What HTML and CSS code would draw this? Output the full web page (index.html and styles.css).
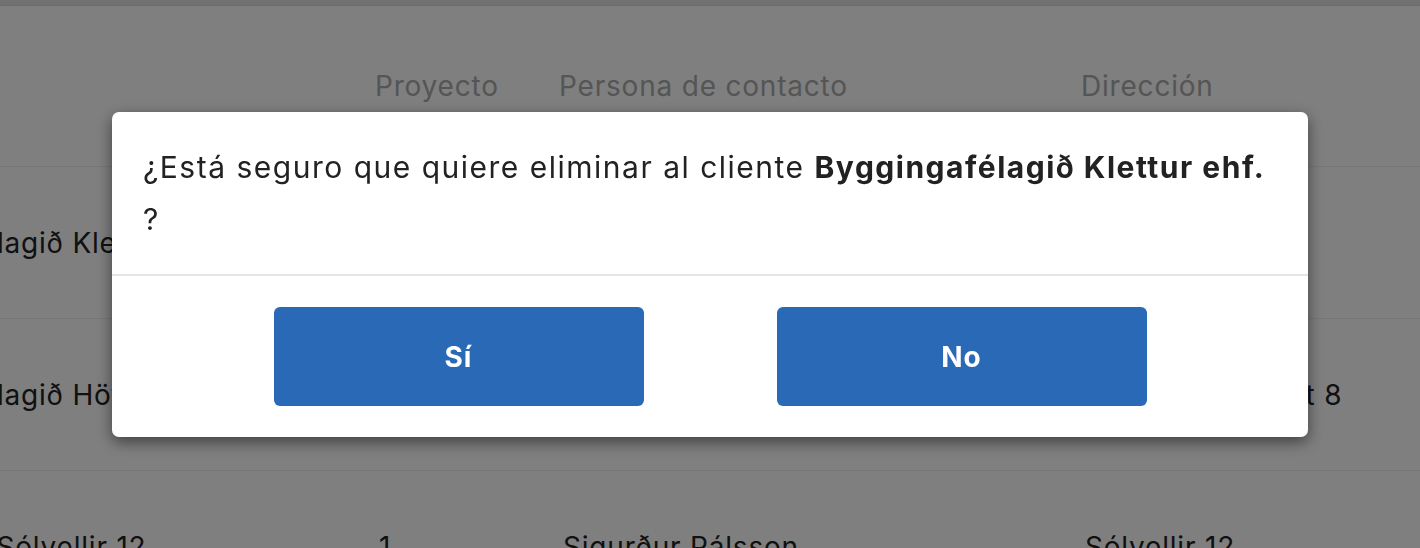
FILE: index.html
```html
<!DOCTYPE html>
<html lang="es">
<head>
<meta charset="utf-8">
<title>Clientes</title>
<link rel="stylesheet" href="styles.css">
</head>
<body>
<div class="topbar"></div>
<div class="table-scroll">
  <div class="table">
    <div class="row head">
      <div class="cell"></div>
      <div class="cell">Proyecto</div>
      <div class="cell">Persona de contacto</div>
      <div class="cell">Dirección</div>
    </div>
    <div class="row">
      <div class="cell">Byggingafélagið Klettur ehf.</div>
      <div class="cell">2</div>
      <div class="cell">Jón Guðmundsson</div>
      <div class="cell">Klettagarðar 4</div>
    </div>
    <div class="row">
      <div class="cell">Byggingafélagið Höfði ehf.</div>
      <div class="cell">3</div>
      <div class="cell">Anna Sigurðardóttir</div>
      <div class="cell">Suðurlandsbraut 8</div>
    </div>
    <div class="row">
      <div class="cell">Húsfélagið Sólvellir 12</div>
      <div class="cell">1</div>
      <div class="cell">Sigurður Pálsson</div>
      <div class="cell">Sólvellir 12</div>
    </div>
  </div>
</div>

<div class="backdrop"></div>
<div class="modal">
  <div class="modal-body">¿Está seguro que quiere eliminar al cliente <b>Byggingafélagið Klettur ehf.</b> ?</div>
  <div class="modal-footer">
    <button class="btn">Sí</button>
    <button class="btn">No</button>
  </div>
</div>
</body>
</html>
```

FILE: styles.css
```css
* { box-sizing: border-box; }
html, body {
  margin: 0;
  height: 100%;
  overflow: hidden;
}
body {
  background: #fff;
  font-family: Inter, Lato, "Liberation Sans", sans-serif;
  color: #222;
}
.topbar {
  height: 6px;
  background: #e2e2e2;
  border-bottom: 1px solid #d8d8d8;
}
.table-scroll {
  overflow: hidden;
}
.table {
  margin-left: -165px;
  font-size: 28px;
  letter-spacing: 0.8px;
}
.row {
  display: grid;
  grid-template-columns: 540px 184px 522px 1fr;
  height: 152px;
  align-items: center;
  border-bottom: 1px solid #eeeeee;
}
.row.head {
  height: 161px;
  color: #aaaaaa;
}
.row:not(.head) .cell {
  padding-left: 4px;
}
.cell {
  white-space: nowrap;
}
.backdrop {
  position: fixed;
  inset: 0;
  background: rgba(0, 0, 0, 0.5);
}
.modal {
  position: fixed;
  top: 112px;
  left: 112px;
  width: 1196px;
  background: #fff;
  border-radius: 7px;
  box-shadow: 0 5px 15px rgba(0, 0, 0, 0.5);
  font-size: 30px;
  letter-spacing: 1.5px;
  color: #222;
}
.modal-body {
  padding: 29px 31px 29px;
  line-height: 52px;
  min-height: 162px;
}
.modal-body b {
  font-weight: 700;
}
.modal-footer {
  border-top: 2px solid #e5e5e5;
  padding: 31px 0;
  display: flex;
  justify-content: center;
  gap: 133px;
}
.btn {
  width: 370px;
  height: 99px;
  border: 0;
  border-radius: 6px;
  background: #2a69b6;
  color: #fff;
  font-family: inherit;
  font-size: 28px;
  letter-spacing: 1px;
  font-weight: 700;
  padding: 0;
}
```
